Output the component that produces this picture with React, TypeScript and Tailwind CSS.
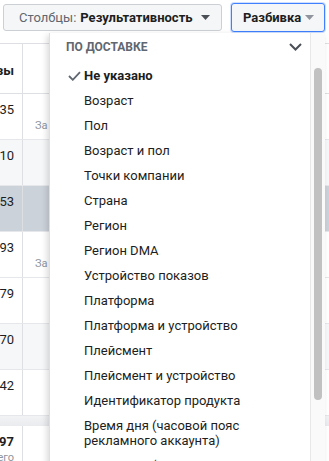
const items = [
  'Возраст',
  'Пол',
  'Возраст и пол',
  'Точки компании',
  'Страна',
  'Регион',
  'Регион DMA',
  'Устройство показов',
  'Платформа',
  'Платформа и устройство',
  'Плейсмент',
  'Плейсмент и устройство',
  'Идентификатор продукта',
  'Время дня (часовой пояс рекламного аккаунта)',
  'Время дня (часовой пояс зрителя)',
];

const rows = [
  { value: '1 235', bg: 'bg-white', note: 'За весь срок' },
  { value: '2810', bg: 'bg-[#f6f7f9]', note: '' },
  { value: '3 053', bg: 'bg-[#ccd2da]', note: '' },
  { value: '1 093', bg: 'bg-white', note: 'За весь срок' },
  { value: '879', bg: 'bg-white', note: '' },
  { value: '470', bg: 'bg-[#f6f7f9]', note: '' },
  { value: '642', bg: 'bg-white', note: '' },
];

function Caret({ className }: { readonly className: string }) {
  return (
    <svg width="9" height="5" viewBox="0 0 9 5" className={className} fill="currentColor">
      <path d="M0 0h9L4.5 5z" />
    </svg>
  );
}

function TableRow({ value, bg, note }: { readonly value: string; readonly bg: string; readonly note: string }) {
  return (
    <div className={`flex h-[46px] border-b border-[#e5e7ea] ${bg}`}>
      <div className="w-[23px] shrink-0 flex justify-end overflow-hidden whitespace-nowrap pt-[8px] pr-[8px] text-[13px] leading-[16px] text-[#1c1e21] border-r border-[#dddfe2]">
        {value}
      </div>
      <div className="flex-1 overflow-hidden whitespace-nowrap pl-[12px] pt-[25px] text-[11px] leading-[14px] text-[#90949c]">
        {note}
      </div>
    </div>
  );
}

export default function App() {
  return (
    <div className="relative w-[329px] h-[461px] overflow-hidden bg-white font-['Roboto',sans-serif]">
      {/* toolbar */}
      <div className="flex items-center gap-[9px] h-[34px] pl-[3px] pt-[1px]">
        <button
          type="button"
          className="flex items-center w-[219px] h-[27px] pl-[15px] rounded-[3px] border border-[#ccd0d5] bg-[#f5f6f7] text-[13px] whitespace-nowrap"
        >
          <span className="text-[#606770]">Столбцы:</span>
          <span className="ml-[4px] font-bold text-[#1c1e21]">Результативность</span>
          <Caret className="ml-[8px] text-[#4b4f56]" />
        </button>
        <button
          type="button"
          className="flex items-center w-[94px] h-[29px] pl-[11px] rounded-[3px] border border-[#4080ff] bg-[#f5f6f7] shadow-[0_0_0_1px_rgba(64,128,255,0.25)] text-[13px] font-bold text-[#1c1e21] whitespace-nowrap"
        >
          Разбивка
          <Caret className="ml-[4px] text-[#90949c]" />
        </button>
      </div>

      {/* table behind */}
      <div className="mt-[9px] border-t border-[#dddfe2]">
        <div className="flex h-[50px] border-b border-[#dddfe2]">
          <div className="w-[23px] shrink-0 flex justify-end items-center overflow-hidden whitespace-nowrap pr-[8px] pt-[4px] text-[13px] font-bold text-[#1c1e21] border-r border-[#dddfe2]">
            Показы
          </div>
          <div className="flex-1" />
        </div>
        {rows.map((r) => (
          <TableRow key={r.value} value={r.value} bg={r.bg} note={r.note} />
        ))}
        <div className="h-[10px] bg-gradient-to-b from-[#f2f3f5] to-[#e9ebee]" />
        <div className="flex h-[60px]">
          <div className="w-[23px] shrink-0 flex flex-col items-end overflow-hidden whitespace-nowrap pt-[8px] pr-[8px] border-r border-[#dddfe2]">
            <span className="text-[13px] leading-[16px] font-bold text-[#1c1e21]">4 997</span>
            <span className="text-[11px] leading-[16px] text-[#90949c]">Всего</span>
          </div>
          <div className="flex-1" />
        </div>
      </div>

      {/* breakdown dropdown */}
      <div className="absolute left-[49px] top-[33px] w-[276px] h-[460px] flex bg-white border-l border-[#dddfe2] shadow-[-2px_2px_6px_rgba(0,0,0,0.15)]">
        <div className="flex-1 flex flex-col">
          <div className="flex items-center justify-between h-[32px] pl-[16px] pr-[8px] pb-[1px]">
            <span className="text-[12px] font-bold text-[#606770]">ПО ДОСТАВКЕ</span>
            <svg width="13" height="8" viewBox="0 0 13 8" fill="none" stroke="#4b4f56" strokeWidth="2">
              <path d="M1 1l5.5 5.5L12 1" />
            </svg>
          </div>
          <ul className="pt-[1px] text-[13px] leading-[15px] text-[#1c1e21]">
            <li className="flex items-center py-[5px] pl-[18px] font-bold">
              <svg width="13" height="10" viewBox="0 0 13 10" fill="none" stroke="#606770" strokeWidth="1.8" className="mr-[3px]">
                <path d="M1 5l3.8 3.8L12 1.2" />
              </svg>
              Не указано
            </li>
            {items.map((label) => (
              <li key={label} className="py-[5px] pl-[34px] pr-[20px]">
                {label}
              </li>
            ))}
          </ul>
        </div>
        <div className="w-[15px] shrink-0 bg-[#fafafa] border-l border-[#e8e8e8] pt-[35px]">
          <div className="mx-auto w-[8px] h-[332px] rounded-full bg-[#c1c1c1]" />
        </div>
      </div>
    </div>
  );
}
